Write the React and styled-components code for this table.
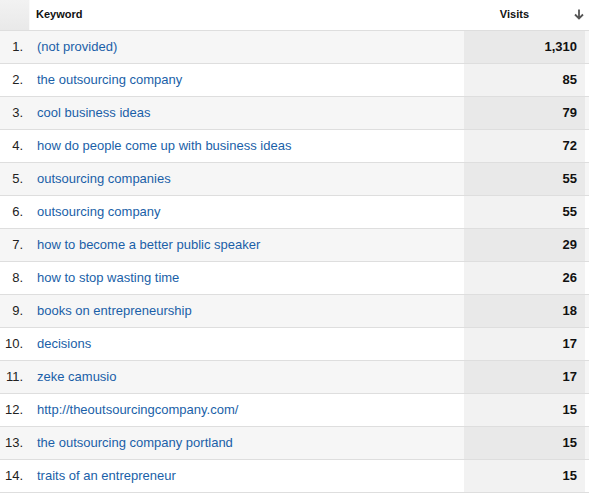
import React from 'react';
import styled, { createGlobalStyle } from 'styled-components';

const Global = createGlobalStyle`
  body {
    margin: 0;
    background: #fff;
    font-family: Arial, "Liberation Sans", sans-serif;
  }
`;

const Table = styled.div`
  width: 589px;
  display: flex;
  flex-direction: column;
`;

const Row = styled.div`
  display: grid;
  grid-template-columns: 30px 434px 121px 4px;
  height: ${p => (p.$head ? 30 : 32)}px;
  border-bottom: 1px solid #dedede;
  background: ${p => (p.$odd ? '#f6f6f6' : '#fff')};
  align-items: stretch;
`;

const CornerCell = styled.div`
  background: linear-gradient(#f2f2f2, #e9e9e9);
  border-right: 1px solid #fafafa;
`;

const HeadLabel = styled.div`
  display: flex;
  align-items: center;
  padding-left: 6px;
  padding-bottom: 2px;
  font-size: 11px;
  font-weight: bold;
  color: #111;
`;

const HeadVisits = styled.div`
  display: flex;
  align-items: center;
  justify-content: flex-end;
  padding-right: 4px;
  padding-bottom: 2px;
  font-size: 11px;
  font-weight: bold;
  color: #111;
  grid-column: 3 / 5;
`;

const ArrowWrap = styled.span`
  display: inline-flex;
  margin-left: 44px;
  width: 12px;
  justify-content: center;
`;

const Index = styled.div`
  display: flex;
  align-items: center;
  justify-content: flex-end;
  padding-right: 7px;
  padding-bottom: 2px;
  font-size: 13px;
  color: #222;
`;

const Keyword = styled.a`
  display: flex;
  align-items: center;
  padding-left: 7px;
  padding-bottom: 2px;
  font-size: 13px;
  color: #1a5fa8;
  text-decoration: none;
`;

const Visits = styled.div`
  display: flex;
  align-items: center;
  justify-content: flex-end;
  padding-right: 8px;
  padding-bottom: 2px;
  font-size: 13px;
  font-weight: bold;
  color: #111;
  background: ${p => (p.$odd ? '#e9e9e9' : '#f2f2f2')};
`;

const data = [
  ['(not provided)', '1,310'],
  ['the outsourcing company', '85'],
  ['cool business ideas', '79'],
  ['how do people come up with business ideas', '72'],
  ['outsourcing companies', '55'],
  ['outsourcing company', '55'],
  ['how to become a better public speaker', '29'],
  ['how to stop wasting time', '26'],
  ['books on entrepreneurship', '18'],
  ['decisions', '17'],
  ['zeke camusio', '17'],
  ['http://theoutsourcingcompany.com/', '15'],
  ['the outsourcing company portland', '15'],
  ['traits of an entrepreneur', '15'],
];

const DownArrow = () => (
  <svg width="10" height="11" viewBox="0 0 10 11">
    <path d="M5 0.5 V9.5 M1 5.5 L5 9.5 L9 5.5" stroke="#555" strokeWidth="1.8" fill="none" />
  </svg>
);

export default function App() {
  return (
    <>
      <Global />
      <Table>
        <Row $head>
          <CornerCell />
          <HeadLabel>Keyword</HeadLabel>
          <HeadVisits>
            Visits
            <ArrowWrap><DownArrow /></ArrowWrap>
          </HeadVisits>
        </Row>
        {data.map(([kw, v], i) => {
          const odd = i % 2 === 0;
          return (
            <Row key={i} $odd={odd}>
              <Index>{i + 1}.</Index>
              <Keyword href="#">{kw}</Keyword>
              <Visits $odd={odd}>{v}</Visits>
              <div />
            </Row>
          );
        })}
      </Table>
    </>
  );
}
